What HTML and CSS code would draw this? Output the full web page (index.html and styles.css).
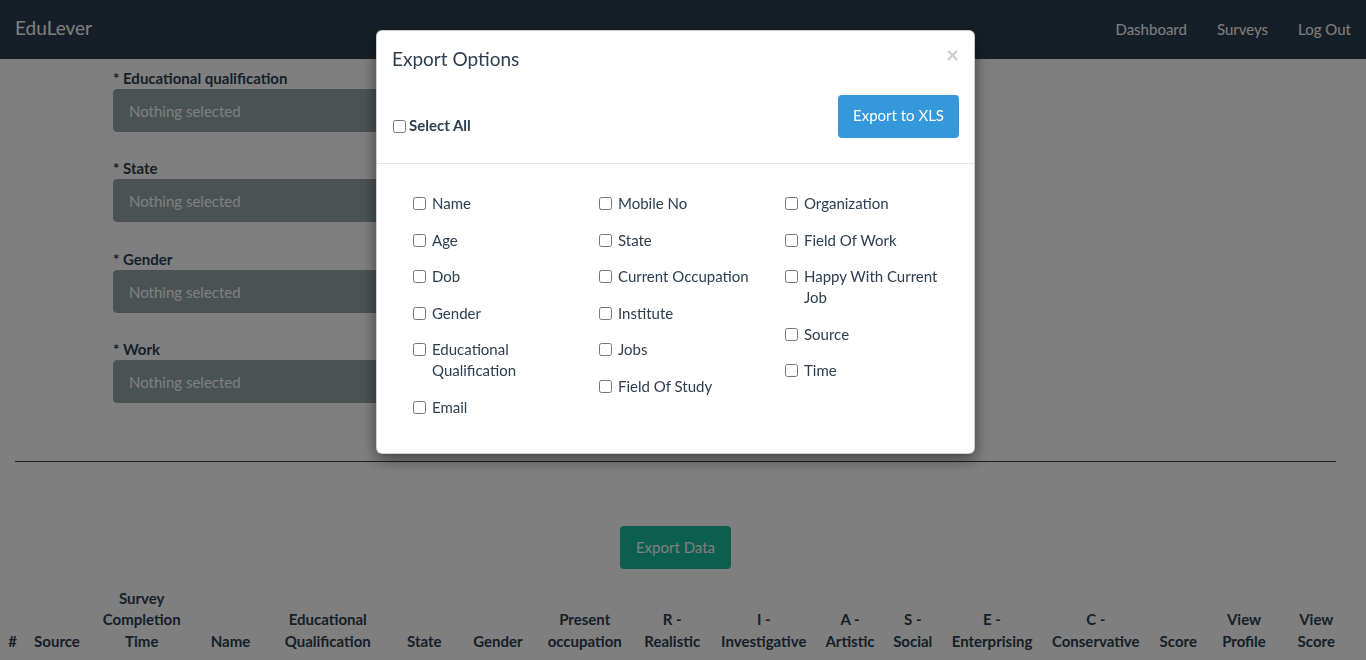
FILE: index.html
```html
<!DOCTYPE html>
<html lang="en">
<head>
<meta charset="utf-8">
<title>EduLever</title>
<link rel="stylesheet" href="styles.css">
</head>
<body>
<nav class="navbar">
  <a class="brand" href="#">EduLever</a>
  <ul class="nav-links">
    <li><a href="#">Dashboard</a></li>
    <li><a href="#">Surveys</a></li>
    <li><a href="#">Log Out</a></li>
  </ul>
</nav>

<main class="page">
  <div class="filters">
    <div class="form-group">
      <label class="field-label">* Educational qualification</label>
      <button class="select-btn">Nothing selected</button>
    </div>
    <div class="form-group">
      <label class="field-label">* State</label>
      <button class="select-btn">Nothing selected</button>
    </div>
    <div class="form-group">
      <label class="field-label">* Gender</label>
      <button class="select-btn">Nothing selected</button>
    </div>
    <div class="form-group">
      <label class="field-label">* Work</label>
      <button class="select-btn">Nothing selected</button>
    </div>
  </div>

  <hr class="divider">

  <div class="export-row">
    <button class="btn-success">Export Data</button>
  </div>

  <table class="results">
    <thead>
      <tr>
        <th>#</th>
        <th>Source</th>
        <th>Survey Completion Time</th>
        <th>Name</th>
        <th>Educational Qualification</th>
        <th>State</th>
        <th>Gender</th>
        <th>Present occupation</th>
        <th>R - Realistic</th>
        <th>I - Investigative</th>
        <th>A - Artistic</th>
        <th>S - Social</th>
        <th>E - Enterprising</th>
        <th>C - Conservative</th>
        <th>Score</th>
        <th>View Profile</th>
        <th>View Score</th>
      </tr>
    </thead>
  </table>
</main>

<div class="backdrop"></div>

<div class="modal-wrap">
  <div class="modal">
    <div class="modal-header">
      <div class="title-row">
        <h4 class="modal-title">Export Options</h4>
        <button class="close">&times;</button>
      </div>
      <div class="action-row">
        <label class="select-all"><input type="checkbox"><span>Select All</span></label>
        <button class="btn-info">Export to XLS</button>
      </div>
    </div>
    <div class="modal-body">
      <div class="opt-col">
        <label class="opt"><input type="checkbox"><span>Name</span></label>
        <label class="opt"><input type="checkbox"><span>Age</span></label>
        <label class="opt"><input type="checkbox"><span>Dob</span></label>
        <label class="opt"><input type="checkbox"><span>Gender</span></label>
        <label class="opt"><input type="checkbox"><span>Educational Qualification</span></label>
        <label class="opt"><input type="checkbox"><span>Email</span></label>
      </div>
      <div class="opt-col">
        <label class="opt"><input type="checkbox"><span>Mobile No</span></label>
        <label class="opt"><input type="checkbox"><span>State</span></label>
        <label class="opt"><input type="checkbox"><span>Current Occupation</span></label>
        <label class="opt"><input type="checkbox"><span>Institute</span></label>
        <label class="opt"><input type="checkbox"><span>Jobs</span></label>
        <label class="opt"><input type="checkbox"><span>Field Of Study</span></label>
      </div>
      <div class="opt-col">
        <label class="opt"><input type="checkbox"><span>Organization</span></label>
        <label class="opt"><input type="checkbox"><span>Field Of Work</span></label>
        <label class="opt"><input type="checkbox"><span>Happy With Current Job</span></label>
        <label class="opt"><input type="checkbox"><span>Source</span></label>
        <label class="opt"><input type="checkbox"><span>Time</span></label>
      </div>
    </div>
  </div>
</div>
</body>
</html>
```

FILE: styles.css
```css
* { box-sizing: border-box; }

html, body {
  margin: 0;
  padding: 0;
  height: 660px;
  overflow: hidden;
}

body {
  font-family: Lato, "Open Sans", "Liberation Sans", sans-serif;
  font-size: 15px;
  line-height: 1.42857;
  color: #2c3e50;
  background: #fff;
}

/* Navbar */
.navbar {
  height: 59px;
  background: #2c3e50;
  display: flex;
  align-items: center;
  justify-content: space-between;
}
.brand {
  color: #fff;
  text-decoration: none;
  font-size: 19px;
  line-height: 20px;
  padding: 0 15px;
  margin-top: -4px;
}
.nav-links {
  list-style: none;
  margin: 0;
  padding: 0;
  display: flex;
}
.nav-links a {
  display: block;
  color: #fff;
  text-decoration: none;
  padding: 0 15px;
  line-height: 21px;
}

/* Page */
.page {
  width: 1351px;
}

.filters {
  padding: 8.5px 0 0 113px;
}
.form-group {
  display: flex;
  flex-direction: column;
  align-items: flex-start;
  margin-bottom: 26.5px;
}
.form-group:last-child { margin-bottom: 0; }
.field-label {
  font-weight: 700;
  line-height: 21px;
}
.select-btn {
  width: 555px;
  height: 43px;
  text-align: left;
  font: inherit;
  color: #fff;
  background: #95a5a6;
  border: 1px solid #95a5a6;
  border-radius: 4px;
  padding: 3px 15px 0;
}

.divider {
  border: 0;
  border-top: 1px solid #2c3e50;
  margin: 58px 15px 0 15px;
}

.export-row {
  padding-top: 64px;
  display: flex;
  justify-content: center;
}
.btn-success {
  font: inherit;
  height: 43px;
  padding: 1px 16px 0;
  color: #fff;
  background: #18bc9c;
  border: 0;
  border-radius: 4px;
}

/* Table */
.results {
  margin-top: 11px;
  width: 1352px;
  table-layout: fixed;
  border-collapse: collapse;
}
.results th {
  padding: 8px;
  vertical-align: bottom;
  text-align: center;
  font-weight: 700;
  line-height: 21.4px;
  overflow: visible;
}
.results th:nth-child(1) { width: 25px; padding-left: 4px; padding-right: 4px; }
.results th:nth-child(2) { width: 64px; }
.results th:nth-child(3) { width: 105.5px; }
.results th:nth-child(4) { width: 72px; }
.results th:nth-child(5) { width: 122.5px; }
.results th:nth-child(6) { width: 70.5px; }
.results th:nth-child(7) { width: 77px; }
.results th:nth-child(8) { width: 96.5px; }
.results th:nth-child(9) { width: 78.5px; }
.results th:nth-child(10) { width: 104.5px; }
.results th:nth-child(11) { width: 68px; }
.results th:nth-child(12) { width: 57.5px; }
.results th:nth-child(13) { width: 101px; }
.results th:nth-child(14) { width: 106.5px; }
.results th:nth-child(15) { width: 58.5px; }
.results th:nth-child(16) { width: 73px; }
.results th:nth-child(17) { width: 71.5px; }

/* Backdrop + modal */
.backdrop {
  position: fixed;
  inset: 0;
  background: rgba(0, 0, 0, 0.5);
}
.modal-wrap {
  position: fixed;
  top: 0;
  left: 0;
  right: 15px;
  bottom: 0;
}
.modal {
  width: 599px;
  margin: 30px auto 0;
  background: #fff;
  border: 1px solid rgba(0, 0, 0, 0.2);
  border-radius: 6px;
  box-shadow: 0 5px 15px rgba(0, 0, 0, 0.5);
}
.modal-header {
  padding: 14px 15px 25px 15px;
  border-bottom: 1px solid #e5e5e5;
}
.title-row {
  display: flex;
  justify-content: space-between;
  align-items: flex-start;
}
.modal-title {
  margin: 0;
  font-size: 19px;
  font-weight: 400;
  line-height: 27px;
}
.close {
  font: inherit;
  font-size: 22.5px;
  font-weight: 700;
  line-height: 1;
  color: #000;
  opacity: 0.2;
  background: none;
  border: 0;
  padding: 0;
  margin-top: -1px;
}
.action-row {
  margin-top: 22.5px;
  display: flex;
  justify-content: space-between;
  align-items: flex-end;
}
.select-all {
  display: flex;
  align-items: flex-start;
  font-weight: 700;
  line-height: 21px;
  margin-bottom: 2px;
}
.select-all input {
  margin: 5px 3px 0 1px;
  width: 13px;
  height: 13px;
}
.btn-info {
  font: inherit;
  height: 43px;
  padding: 0 15px;
  color: #fff;
  background: #3498db;
  border: 0;
  border-radius: 4px;
}

.modal-body {
  padding: 29.5px 15px 35px 36px;
  display: grid;
  grid-template-columns: 186px 186px 186px;
  align-items: start;
}
.opt-col {
  display: flex;
  flex-direction: column;
  gap: 15.5px;
}
.opt {
  display: flex;
  align-items: flex-start;
  line-height: 21px;
}
.opt input {
  margin: 4px 6px 0 0;
  width: 13px;
  height: 13px;
  flex: none;
}
.opt span {
  max-width: 150px;
}
```
